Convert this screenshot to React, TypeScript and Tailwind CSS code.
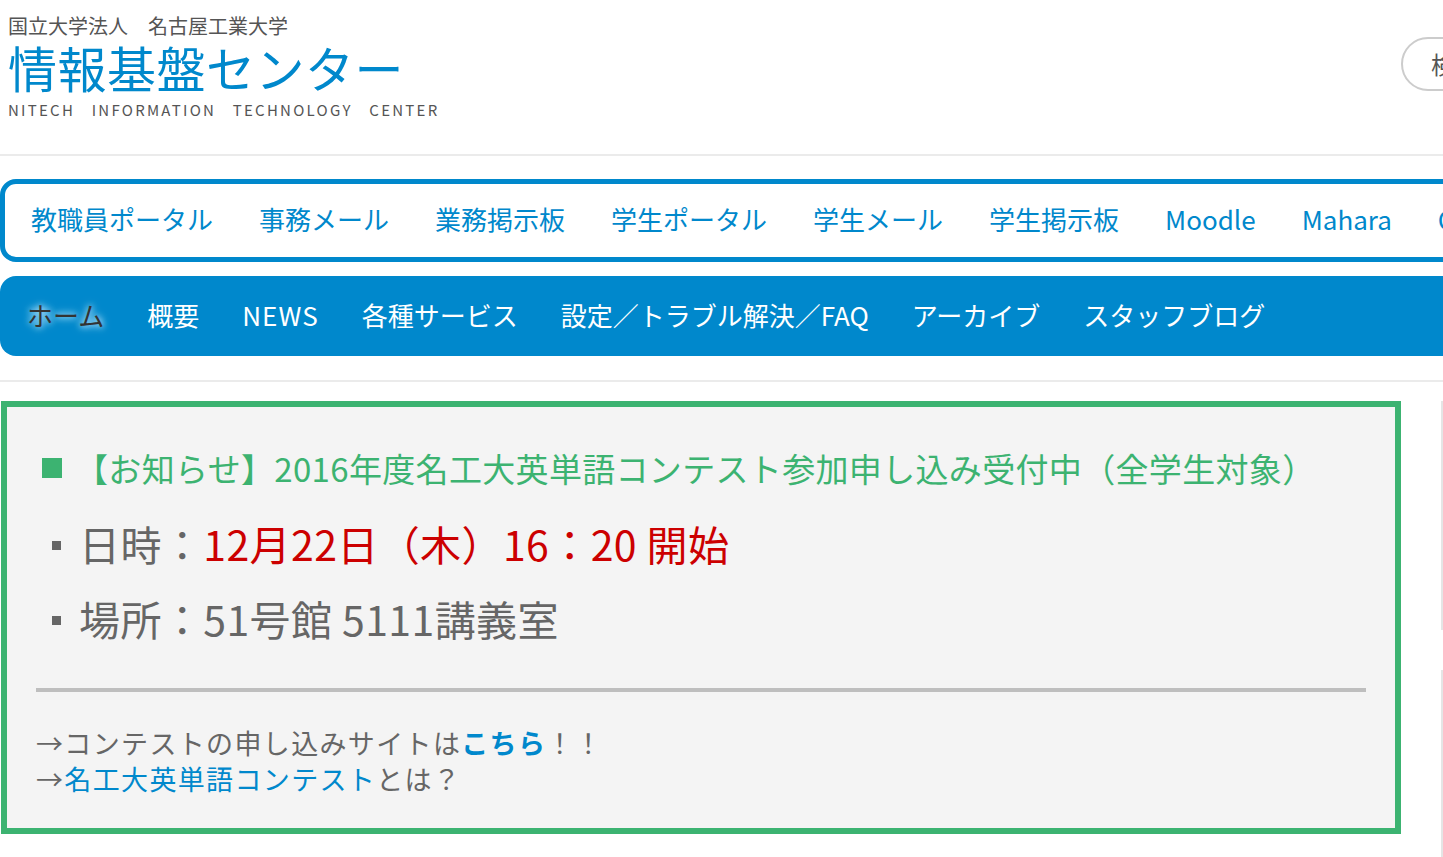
import React from 'react';

const portalLinks = ['教職員ポータル', '事務メール', '業務掲示板', '学生ポータル', '学生メール', '学生掲示板', 'Moodle', 'Mahara', 'Office365'];

const mainMenu = ['ホーム', '概要', 'NEWS', '各種サービス', '設定／トラブル解決／FAQ', 'アーカイブ', 'スタッフブログ'];

function Header() {
  return (
    <header className="flex h-[156px] border-b-2 border-[#ebebeb]">
      <div className="w-[1401px] shrink-0 pl-[8px]">
        <div className="mt-[13px] text-[20px] leading-[26px] text-[#555]">国立大学法人　名古屋工業大学</div>
        <div className="mt-[2px] text-[49px] leading-[52px] tracking-[0.01em] text-[#0088cc]">情報基盤センター</div>
        <div className="mt-[7px] text-[15px] leading-[20px] tracking-[0.15em] [word-spacing:11px] text-[#555]">
          NITECH INFORMATION TECHNOLOGY CENTER
        </div>
      </div>
      <div className="mt-[37px] flex h-[54px] w-[140px] shrink-0 items-center rounded-full border-2 border-[#cccccc] pl-[28px] text-[24px] text-[#555]">
        検索
      </div>
    </header>
  );
}

function PortalNav() {
  return (
    <nav className="mt-[23px] flex h-[83px] items-center gap-[46px] rounded-[16px] border-[5px] border-[#0088cc] bg-white pb-[3px] pl-[26px]">
      {portalLinks.map((l) => (
        <a key={l} className="whitespace-nowrap text-[26px] leading-none text-[#0088cc]">
          {l}
        </a>
      ))}
    </nav>
  );
}

function MainNav() {
  return (
    <nav className="mt-[14px] flex h-[80px] items-center gap-[43px] rounded-[16px] bg-[#0088cc] pb-[3px] pl-[27px]">
      {mainMenu.map((m, i) => (
        <a
          key={m}
          className={
            i === 0
              ? 'whitespace-nowrap text-[26px] leading-none text-[#333] [text-shadow:0_0_6px_#bfe8ff,0_0_10px_#bfe8ff]'
              : m === 'NEWS'
                ? 'whitespace-nowrap text-[26px] leading-none tracking-[0.04em] text-white'
                : 'whitespace-nowrap text-[26px] leading-none text-white'
          }
        >
          {m}
        </a>
      ))}
    </nav>
  );
}

function Notice() {
  return (
    <section className="ml-[1px] w-[1400px] shrink-0 border-[6px] border-[#3cb371] bg-[#f4f4f4] px-[29px] pb-[31px] pt-[37px]">
      <h2 className="flex items-center pl-[6px] text-[33px] leading-[48px] tracking-[0.01em] text-[#3cb371]">
        <span className="inline-block h-[20px] w-[20px] bg-[#3cb371]" />
        <span className="ml-[13px] whitespace-nowrap">【お知らせ】2016年度名工大英単語コンテスト参加申し込み受付中（全学生対象）</span>
      </h2>

      <ul className="mt-[14px] text-[41px] leading-[75px] tracking-[0.01em] text-[#666]">
        <li className="flex items-center pl-[16px]">
          <span className="mt-[3px] inline-block h-[9px] w-[9px] bg-[#666]" />
          <span className="ml-[18px] whitespace-nowrap">
            日時：<span className="text-[#cc0000]">12月22日（木）16：20 開始</span>
          </span>
        </li>
        <li className="flex items-center pl-[16px]">
          <span className="mt-[3px] inline-block h-[9px] w-[9px] bg-[#666]" />
          <span className="ml-[18px] whitespace-nowrap">場所：51号館 5111講義室</span>
        </li>
      </ul>

      <hr className="mt-[32px] h-[4px] border-0 bg-[#bebebe]" />

      <div className="mt-[33px] text-[27px] leading-[36px] tracking-[0.05em] text-[#666]">
        <p>
          →コンテストの申し込みサイトは<a className="font-bold text-[#0088cc]">こちら</a>！！
        </p>
        <p>
          →<a className="text-[#0088cc]">名工大英単語コンテスト</a>とは？
        </p>
      </div>
    </section>
  );
}

function Sidebar() {
  return (
    <aside className="ml-[40px] flex w-[260px] shrink-0 flex-col gap-[40px]">
      <div className="h-[229px] border-l-2 border-[#e5e5e5]" />
      <div className="h-[300px] border-l-2 border-[#e5e5e5]" />
    </aside>
  );
}

export default function App() {
  return (
    <div className="h-[857px] w-full overflow-hidden bg-white font-['Noto_Sans_CJK_JP','Noto_Sans',sans-serif]">
      <div className="w-[1760px]">
        <Header />
        <PortalNav />
        <MainNav />
        <div className="mt-[24px] border-t-2 border-[#ebebeb]" />
        <div className="mt-[19px] flex items-start">
          <Notice />
          <Sidebar />
        </div>
      </div>
    </div>
  );
}
